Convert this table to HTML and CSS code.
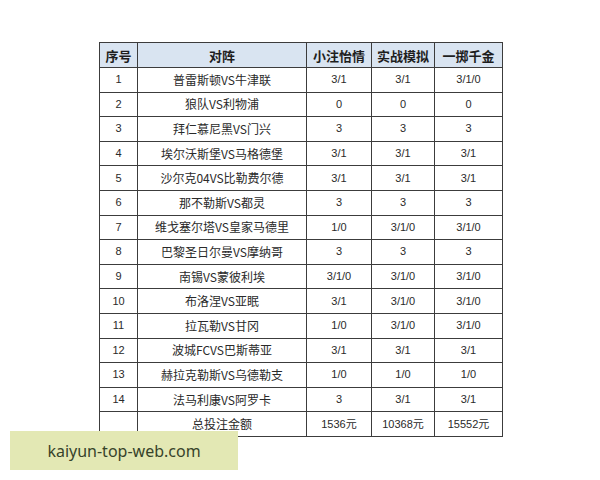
FILE: index.html
```html
<!DOCTYPE html>
<html lang="zh">
<head>
<meta charset="utf-8">
<link rel="stylesheet" href="styles.css">
</head>
<body>
<div class="page">
  <table class="bets">
    <colgroup>
      <col class="c-no"><col class="c-match"><col class="c-a"><col class="c-b"><col class="c-c">
    </colgroup>
    <thead>
      <tr><th>序号</th><th>对阵</th><th>小注怡情</th><th>实战模拟</th><th>一掷千金</th></tr>
    </thead>
    <tbody>
      <tr><td class="num">1</td><td>普雷斯顿VS牛津联</td><td class="num">3/1</td><td class="num">3/1</td><td class="num">3/1/0</td></tr>
      <tr><td class="num">2</td><td>狼队VS利物浦</td><td class="num">0</td><td class="num">0</td><td class="num">0</td></tr>
      <tr><td class="num">3</td><td>拜仁慕尼黑VS门兴</td><td class="num">3</td><td class="num">3</td><td class="num">3</td></tr>
      <tr><td class="num">4</td><td>埃尔沃斯堡VS马格德堡</td><td class="num">3/1</td><td class="num">3/1</td><td class="num">3/1</td></tr>
      <tr><td class="num">5</td><td>沙尔克04VS比勒费尔德</td><td class="num">3/1</td><td class="num">3/1</td><td class="num">3/1</td></tr>
      <tr><td class="num">6</td><td>那不勒斯VS都灵</td><td class="num">3</td><td class="num">3</td><td class="num">3</td></tr>
      <tr><td class="num">7</td><td>维戈塞尔塔VS皇家马德里</td><td class="num">1/0</td><td class="num">3/1/0</td><td class="num">3/1/0</td></tr>
      <tr><td class="num">8</td><td>巴黎圣日尔曼VS摩纳哥</td><td class="num">3</td><td class="num">3</td><td class="num">3</td></tr>
      <tr><td class="num">9</td><td>南锡VS蒙彼利埃</td><td class="num">3/1/0</td><td class="num">3/1/0</td><td class="num">3/1/0</td></tr>
      <tr><td class="num">10</td><td>布洛涅VS亚眠</td><td class="num">3/1</td><td class="num">3/1/0</td><td class="num">3/1/0</td></tr>
      <tr><td class="num">11</td><td>拉瓦勒VS甘冈</td><td class="num">1/0</td><td class="num">3/1/0</td><td class="num">3/1/0</td></tr>
      <tr><td class="num">12</td><td>波城FCVS巴斯蒂亚</td><td class="num">3/1</td><td class="num">3/1</td><td class="num">3/1</td></tr>
      <tr><td class="num">13</td><td>赫拉克勒斯VS乌德勒支</td><td class="num">1/0</td><td class="num">1/0</td><td class="num">1/0</td></tr>
      <tr><td class="num">14</td><td>法马利康VS阿罗卡</td><td class="num">3</td><td class="num">3/1</td><td class="num">3/1</td></tr>
      <tr><td class="num"></td><td>总投注金额</td><td class="num">1536元</td><td class="num">10368元</td><td class="num">15552元</td></tr>
    </tbody>
  </table>
  <div class="watermark">kaiyun-top-web.com</div>
</div>
</body>
</html>
```

FILE: styles.css
```css
html, body {
  margin: 0;
  padding: 0;
  background: #ffffff;
}

.page {
  position: relative;
  width: 600px;
  height: 480px;
  padding: 42px 0 0 99px;
  box-sizing: border-box;
}

.bets {
  border-collapse: collapse;
  table-layout: fixed;
  width: 403px;
  font-family: "Noto Sans CJK SC", "Liberation Sans", sans-serif;
  color: #2a2a2a;
}

.c-no { width: 38px; }
.c-match { width: 169px; }
.c-a { width: 65px; }
.c-b { width: 63px; }
.c-c { width: 68px; }

.bets th,
.bets td {
  border: 1px solid #3c3c3c;
  text-align: center;
  padding: 0;
  line-height: 1;
  white-space: nowrap;
}

.bets th {
  height: 24px;
  background: #d9e4f1;
  font-size: 13px;
  font-weight: bold;
  color: #1e1e1e;
}

.bets td {
  height: 23.6px;
  font-size: 12px;
}

.bets td.num {
  font-family: "Liberation Sans", "Noto Sans CJK SC", sans-serif;
  font-size: 11px;
}

.watermark {
  position: absolute;
  left: 10px;
  top: 431px;
  width: 228px;
  height: 39px;
  background: #e3e8b4;
  color: #37432a;
  font-family: "Noto Sans", "Liberation Sans", sans-serif;
  font-size: 16px;
  display: flex;
  align-items: center;
  justify-content: center;
}
```
